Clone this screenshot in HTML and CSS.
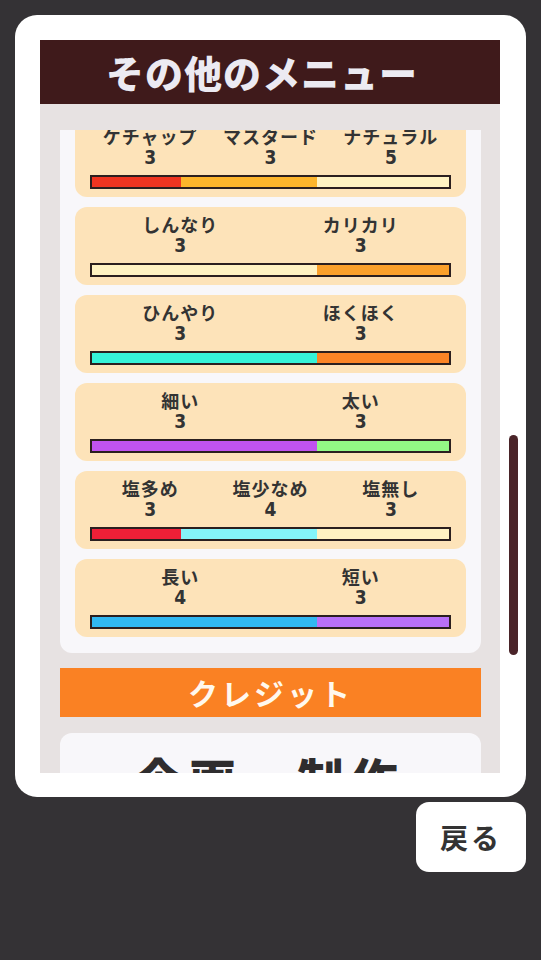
FILE: index.html
```html
<!DOCTYPE html>
<html lang="ja">
<head>
    <meta charset="UTF-8">
    <title>その他のメニュー</title>
    <link rel="stylesheet" href="styles.css">
</head>
<body>
    <div class="screen">
        <div class="panel">
            <div class="panel-title">その他のメニュー</div>
            <div class="panel-body">
                <div class="scroller">
                    <div class="scroll-content">
                        <div class="option-list">
                            <div class="option">
                                <div class="labels cols-3">
                                    <div class="label"><span class="name">ケチャップ</span><span class="count">3</span></div>
                                    <div class="label"><span class="name">マスタード</span><span class="count">3</span></div>
                                    <div class="label"><span class="name">ナチュラル</span><span class="count">5</span></div>
                                </div>
                                <div class="bar">
                                    <span class="seg red" style="width: 25%"></span>
                                    <span class="seg mustard" style="width: 38%"></span>
                                    <span class="seg cream" style="width: 37%"></span>
                                </div>
                            </div>
                            <div class="option">
                                <div class="labels cols-2">
                                    <div class="label"><span class="name">しんなり</span><span class="count">3</span></div>
                                    <div class="label"><span class="name">カリカリ</span><span class="count">3</span></div>
                                </div>
                                <div class="bar">
                                    <span class="seg cream" style="width: 63%"></span>
                                    <span class="seg amber" style="width: 37%"></span>
                                </div>
                            </div>
                            <div class="option">
                                <div class="labels cols-2">
                                    <div class="label"><span class="name">ひんやり</span><span class="count">3</span></div>
                                    <div class="label"><span class="name">ほくほく</span><span class="count">3</span></div>
                                </div>
                                <div class="bar">
                                    <span class="seg turquoise" style="width: 63%"></span>
                                    <span class="seg orange" style="width: 37%"></span>
                                </div>
                            </div>
                            <div class="option">
                                <div class="labels cols-2">
                                    <div class="label"><span class="name">細い</span><span class="count">3</span></div>
                                    <div class="label"><span class="name">太い</span><span class="count">3</span></div>
                                </div>
                                <div class="bar">
                                    <span class="seg violet" style="width: 63%"></span>
                                    <span class="seg green" style="width: 37%"></span>
                                </div>
                            </div>
                            <div class="option">
                                <div class="labels cols-3">
                                    <div class="label"><span class="name">塩多め</span><span class="count">3</span></div>
                                    <div class="label"><span class="name">塩少なめ</span><span class="count">4</span></div>
                                    <div class="label"><span class="name">塩無し</span><span class="count">3</span></div>
                                </div>
                                <div class="bar">
                                    <span class="seg crimson" style="width: 25%"></span>
                                    <span class="seg cyan" style="width: 38%"></span>
                                    <span class="seg cream" style="width: 37%"></span>
                                </div>
                            </div>
                            <div class="option">
                                <div class="labels cols-2">
                                    <div class="label"><span class="name">長い</span><span class="count">4</span></div>
                                    <div class="label"><span class="name">短い</span><span class="count">3</span></div>
                                </div>
                                <div class="bar">
                                    <span class="seg blue" style="width: 63%"></span>
                                    <span class="seg lilac" style="width: 37%"></span>
                                </div>
                            </div>
                        </div>

                        <div class="section-title">クレジット</div>

                        <div class="credit-card">
                            <div class="credit-heading">企画・制作</div>
                        </div>
                    </div>
                </div>
            </div>
            <div class="scrollbar"></div>
        </div>
        <div class="actions">
            <button class="back-button">戻る</button>
        </div>
    </div>
</body>
</html>
```

FILE: styles.css
```css
html, body {
    margin: 0;
    padding: 0;
}
body {
    background-color: #343235;
    font-family: "Noto Sans CJK JP", "Noto Sans", sans-serif;
    color: #333;
}
.screen {
    width: 541px;
    height: 960px;
    padding: 15px 15px 0 15px;
    box-sizing: border-box;
}
.panel {
    position: relative;
    height: 782px;
    background-color: #fff;
    border-radius: 22px;
    padding: 25px 26px 24px 25px;
    box-sizing: border-box;
    display: flex;
    flex-direction: column;
}
.panel-title {
    height: 64px;
    flex-shrink: 0;
    background-color: #3f1a1b;
    color: #eceaf2;
    font-size: 38px;
    font-weight: 900;
    letter-spacing: 1px;
    text-align: center;
    line-height: 64px;
    padding-right: 16px;
}
.panel-body {
    flex: 1;
    background-color: #e7e2e2;
    padding: 26px 19px 0 20px;
    display: flex;
    flex-direction: column;
    min-height: 0;
}
.scroller {
    flex: 1;
    overflow: hidden;
}
.scroll-content {
    margin-top: -26px;
}
.option-list {
    background-color: #f8f7fa;
    border-radius: 12px;
    padding: 15px 15px 16px 15px;
    display: flex;
    flex-direction: column;
    gap: 10px;
}
.option {
    height: 78px;
    box-sizing: border-box;
    background-color: #fde3b9;
    border-radius: 12px;
    padding: 7px 15px 0 15px;
}
.labels {
    display: grid;
    text-align: center;
}
.cols-2 {
    grid-template-columns: 1fr 1fr;
}
.cols-3 {
    grid-template-columns: 1fr 1fr 1fr;
}
.label {
    display: flex;
    flex-direction: column;
    align-items: center;
}
.name {
    font-size: 18px;
    font-weight: 700;
    letter-spacing: 1px;
    line-height: 21px;
    color: #333;
}
.count {
    font-family: "Liberation Sans Narrow", "DejaVu Sans Condensed", sans-serif;
    font-stretch: condensed;
    font-size: 19px;
    font-weight: 700;
    line-height: 20px;
    color: #333;
}
.bar {
    display: flex;
    height: 14px;
    margin-top: 8px;
    border: 2px solid #2b1f1f;
    box-sizing: border-box;
    background-color: #fff3c4;
}
.seg {
    display: block;
    height: 100%;
}
.red { background-color: #ef3420; }
.mustard { background-color: #fdb52b; }
.cream { background-color: #fff2c2; }
.amber { background-color: #fba02a; }
.turquoise { background-color: #36f2d8; }
.orange { background-color: #fb8426; }
.violet { background-color: #c153f0; }
.green { background-color: #93f985; }
.crimson { background-color: #ef1f37; }
.cyan { background-color: #84f4f9; }
.blue { background-color: #31b8f1; }
.lilac { background-color: #b970f8; }

.section-title {
    margin-top: 15px;
    height: 49px;
    background-color: #fa8123;
    color: #fff8ee;
    font-size: 30px;
    font-weight: 700;
    letter-spacing: 3px;
    text-align: center;
    line-height: 49px;
}
.credit-card {
    margin-top: 16px;
    background-color: #f8f7fa;
    border-radius: 12px;
    padding: 14px 0 20px 0;
    text-align: center;
}
.credit-heading {
    font-size: 46px;
    font-weight: 900;
    letter-spacing: 8px;
    color: #2f2d2e;
    line-height: 60px;
}
.scrollbar {
    position: absolute;
    left: 494px;
    top: 420px;
    width: 9px;
    height: 220px;
    border-radius: 5px;
    background-color: #4a2429;
}
.actions {
    display: flex;
    justify-content: flex-end;
    padding-top: 5px;
}
.back-button {
    width: 110px;
    height: 70px;
    background-color: #fff;
    border: none;
    border-radius: 13px;
    font-family: "Noto Sans CJK JP", sans-serif;
    font-size: 28px;
    font-weight: 700;
    letter-spacing: 3px;
    color: #333;
}
```
